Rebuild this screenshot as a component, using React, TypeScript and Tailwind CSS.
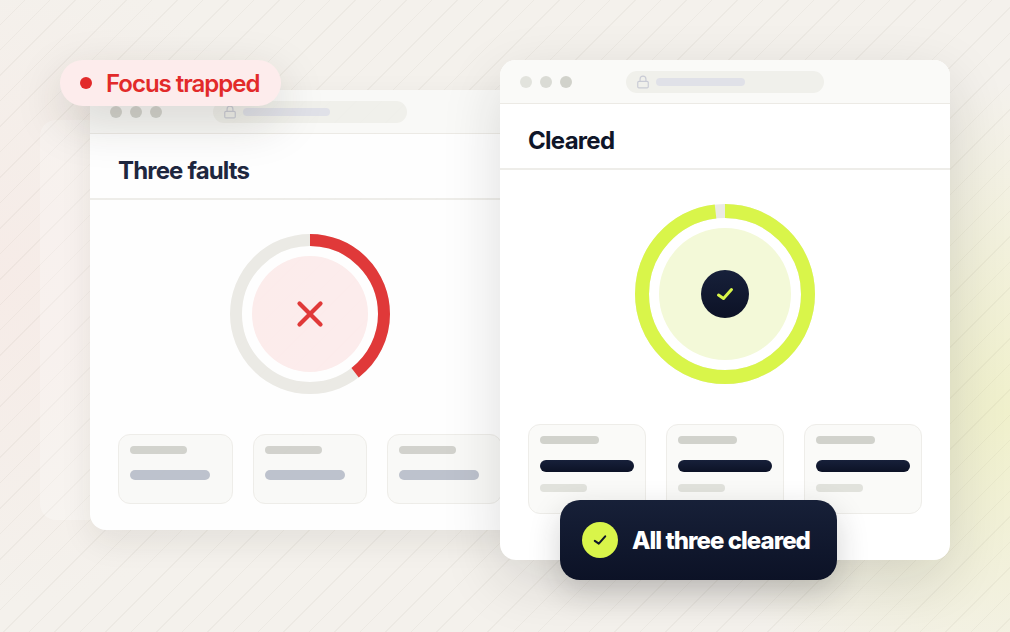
import { Lock, X } from 'lucide-react';

function Chrome({ dots, pill, gap, bar }: { dots: string[]; pill: string; gap: string; bar: string }) {
  return (
    <div className="h-[44px] shrink-0 flex items-center pl-[20px] bg-[#fafaf8] border-b border-[#eceae5]">
      <div className="flex gap-[8px]">
        {dots.map((dot, i) => (
          <span key={i} className={`w-[12px] h-[12px] rounded-full ${dot}`} />
        ))}
      </div>
      <div className={`h-[22px] rounded-full bg-[#f0f0eb] flex items-center pl-[10px] gap-[6px] ${gap} ${pill}`}>
        <Lock size={14} strokeWidth={2} className="text-[#c9cbd5]" />
        <span className={`h-[8px] rounded-full bg-[#e0e1e8] ${bar}`} />
      </div>
    </div>
  );
}

function Card({ label, value, sub, height }: { label: string; value: string; sub?: boolean; height: string }) {
  return (
    <div className={`flex-1 rounded-[12px] bg-[#fafaf8] border border-[#eeede9] p-[11px] ${height}`}>
      <div className={`h-[8px] rounded-full bg-[#d1d2cc] ${label}`} />
      <div className={`mt-[16px] rounded-full ${value}`} />
      {sub && <div className="mt-[12px] w-[47px] h-[8px] rounded-full bg-[#e1e2dc]" />}
    </div>
  );
}

function Ring({ size, stroke, color, fraction }: { size: number; stroke: number; color: string; fraction: number }) {
  const r = (size - stroke) / 2;
  const c = 2 * Math.PI * r;
  return (
    <svg width={size} height={size} className="absolute inset-0 -rotate-90">
      <circle cx={size / 2} cy={size / 2} r={r} fill="none" stroke="#ebeae5" strokeWidth={stroke} />
      <circle
        cx={size / 2}
        cy={size / 2}
        r={r}
        fill="none"
        stroke={color}
        strokeWidth={stroke}
        strokeDasharray={`${c * fraction} ${c}`}
      />
    </svg>
  );
}

function CheckMark({ size, color, width }: { size: number; color: string; width: number }) {
  return (
    <svg width={size} height={size} viewBox="0 0 20 20" fill="none">
      <path d="M3.5 11 8.5 14.5 16.5 5.5" stroke={color} strokeWidth={width} strokeLinecap="round" strokeLinejoin="round" />
    </svg>
  );
}

export default function App() {
  return (
    <div className="relative w-[1010px] h-[632px] overflow-hidden bg-[#f4f1ec] font-['Inter',sans-serif]">
      {/* Backdrop glows and hatching */}
      <div className="absolute inset-0 bg-[radial-gradient(circle_at_0%_45%,rgba(250,225,222,0.35),transparent_30%),radial-gradient(circle_at_100%_65%,rgba(238,240,190,0.7),transparent_30%)]" />
      <div className="absolute inset-0 bg-[repeating-linear-gradient(135deg,transparent,transparent_17px,rgba(120,110,90,0.06)_17px,rgba(120,110,90,0.06)_18px)]" />

      {/* Ghost panel behind the left window */}
      <div className="absolute left-[40px] top-[120px] w-[200px] h-[400px] rounded-[16px] bg-white/25" />

      {/* Before window */}
      <div className="absolute left-[90px] top-[90px] w-[440px] h-[440px] rounded-[16px] bg-white opacity-[0.97] flex flex-col overflow-hidden shadow-[0_12px_32px_rgba(40,35,25,0.08)]">
        <Chrome dots={['bg-[#d3d4ce]', 'bg-[#d3d4ce]', 'bg-[#d3d4ce]']} gap="ml-[51px]" pill="w-[194px]" bar="w-[87px]" />
        <div className="h-[66px] shrink-0 flex items-center px-[28px] pt-[9px] border-b-2 border-[#eeede9]">
          <h2 className="text-[24px] font-bold tracking-[-0.035em] text-[#18213a]">Three faults</h2>
        </div>
        <div className="flex-1 flex flex-col px-[28px] pt-[34px]">
          <div className="relative w-[160px] h-[160px] self-center flex items-center justify-center">
            <Ring size={160} stroke={12} color="#e03434" fraction={0.395} />
            <div className="w-[116px] h-[116px] rounded-full bg-[#fdecec] flex items-center justify-center">
              <X size={42} strokeWidth={2.4} className="text-[#e03434]" />
            </div>
          </div>
          <div className="mt-[40px] flex gap-[20px]">
            <Card height="h-[70px]" label="w-[57px]" value="w-[80px] h-[10px] bg-[#bcc1cc]" />
            <Card height="h-[70px]" label="w-[57px]" value="w-[80px] h-[10px] bg-[#bcc1cc]" />
            <Card height="h-[70px]" label="w-[57px]" value="w-[80px] h-[10px] bg-[#bcc1cc]" />
          </div>
        </div>
      </div>

      {/* After window */}
      <div className="absolute left-[500px] top-[60px] w-[450px] h-[500px] rounded-[16px] bg-white flex flex-col overflow-hidden shadow-[0_20px_60px_rgba(30,30,30,0.14)]">
        <Chrome dots={['bg-[#e2e3dd]', 'bg-[#dadbd5]', 'bg-[#d1d2cb]']} gap="ml-[54px]" pill="w-[198px]" bar="w-[89px]" />
        <div className="h-[66px] shrink-0 flex items-center px-[28px] pt-[9px] border-b-2 border-[#eeede9]">
          <h2 className="text-[24px] font-bold tracking-[-0.03em] text-[#0f1629]">Cleared</h2>
        </div>
        <div className="flex-1 flex flex-col px-[28px] pt-[34px]">
          <div className="relative w-[180px] h-[180px] self-center flex items-center justify-center">
            <Ring size={180} stroke={14} color="#d9f54a" fraction={0.98} />
            <div className="w-[132px] h-[132px] rounded-full bg-[#f3f9d8] flex items-center justify-center">
              <div className="w-[48px] h-[48px] rounded-full bg-gradient-to-b from-[#17203a] to-[#0c1226] flex items-center justify-center">
                <CheckMark size={20} color="#d9f54a" width={3} />
              </div>
            </div>
          </div>
          <div className="mt-[40px] flex gap-[20px]">
            <Card sub height="h-[90px]" label="w-[59px]" value="w-[94px] h-[12px] bg-gradient-to-b from-[#17203a] to-[#0c1226]" />
            <Card sub height="h-[90px]" label="w-[59px]" value="w-[94px] h-[12px] bg-gradient-to-b from-[#17203a] to-[#0c1226]" />
            <Card sub height="h-[90px]" label="w-[59px]" value="w-[94px] h-[12px] bg-gradient-to-b from-[#17203a] to-[#0c1226]" />
          </div>
        </div>
      </div>

      {/* Status badges */}
      <div className="absolute left-[60px] top-[60px] w-[221px] h-[46px] rounded-[23px] bg-[#fdecec] flex items-center pl-[20px] gap-[14px] shadow-[0_16px_48px_rgba(40,35,25,0.17)]">
        <span className="w-[12px] h-[12px] rounded-full bg-[#e22a2a]" />
        <span className="mt-[2px] text-[24px] font-semibold tracking-[-0.042em] text-[#e22a2a]">Focus trapped</span>
      </div>
      <div className="absolute left-[560px] top-[500px] w-[277px] h-[80px] rounded-[20px] bg-gradient-to-b from-[#172038] to-[#0c1226] flex items-center pl-[22px] gap-[14px] shadow-[0_12px_32px_rgba(30,30,30,0.2)]">
        <span className="w-[36px] h-[36px] rounded-full bg-[#d9f54a] flex items-center justify-center">
          <CheckMark size={16} color="#0f1629" width={2.6} />
        </span>
        <span className="mt-[2px] text-[24px] font-extrabold tracking-[-0.04em] text-white">All three cleared</span>
      </div>
    </div>
  );
}
